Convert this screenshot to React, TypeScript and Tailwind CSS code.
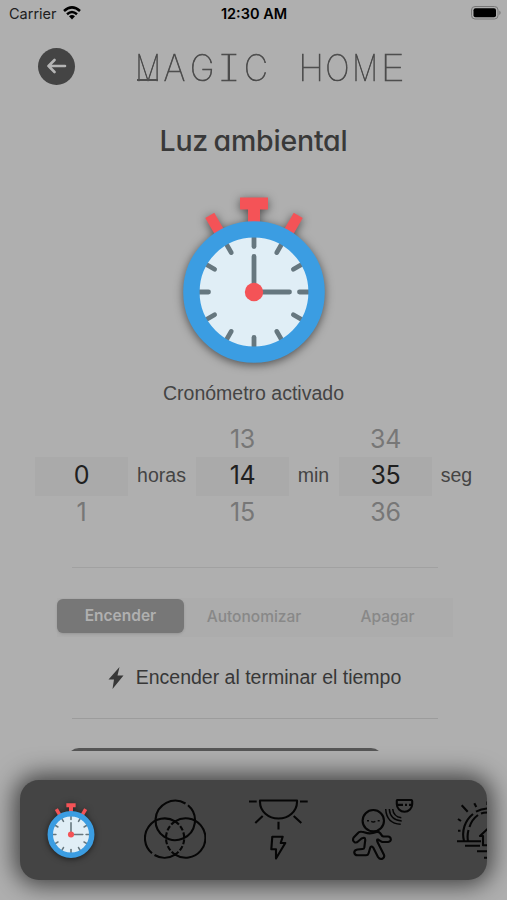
import type { ReactNode } from 'react';

type PickerColumn = {
  label: string;
  before: string;
  value: string;
  after: string;
  labelClass: string;
};

const columns: PickerColumn[] = [
  { label: 'horas', before: '', value: '0', after: '1', labelClass: 'w-[68px] pr-px' },
  { label: 'min', before: '13', value: '14', after: '15', labelClass: 'w-[50px] pr-px' },
  { label: 'seg', before: '34', value: '35', after: '36', labelClass: 'w-[49px]' },
];

const titleLetters = [
  { letter: 'M', className: 'scale-x-[0.78]' },
  { letter: 'A', className: 'scale-x-[0.95]' },
  { letter: 'G', className: 'scale-x-[0.92]' },
  { letter: 'I', className: 'scale-x-[1.5]' },
  { letter: 'C', className: 'scale-x-[0.92]' },
  { letter: ' ', className: '' },
  { letter: 'H', className: 'scale-x-[0.96]' },
  { letter: 'O', className: 'scale-x-[0.9]' },
  { letter: 'M', className: 'scale-x-[0.78]' },
  { letter: 'E', className: 'scale-x-[1.15]' },
];

const modes = [
  { label: 'Encender', className: 'mt-px h-[34px] w-[127px] rounded-md bg-[#777] pt-px font-semibold text-[#b0b0b0] shadow-sm' },
  { label: 'Autonomizar', className: 'h-[38px] w-[140px]' },
  { label: 'Apagar', className: 'h-[38px] w-[127px]' },
];

const tickAngles = [0, 30, 60, 90, 120, 150, 180, 210, 240, 270, 300, 330];

function Stopwatch({ className }: { className: string }) {
  return (
    <svg viewBox="-75 -98 150 172" className={className}>
      <g fill="#f45357">
        <path d="M-14-94.500H14V-82.500H6V-68H-6V-82.500H-14Z" />
        <rect x="-5.200" y="-88.500" width="10.400" height="22" transform="rotate(-30)" />
        <rect x="-5.200" y="-88.500" width="10.400" height="22" transform="rotate(30)" />
      </g>
      <circle r="60" fill="#e0eef6" />
      <g stroke="#66777f" strokeWidth="4.800" strokeLinecap="round">
        {tickAngles.map((angle) => (
          <path key={angle} d="M0-57V-45.500" transform={`rotate(${angle})`} />
        ))}
        <path d="M0-35.500V0H35.500" fill="none" />
      </g>
      <circle r="62.600" fill="none" stroke="#3b9de2" strokeWidth="16.400" />
      <circle r="9.200" fill="#f45357" />
    </svg>
  );
}

function NavIcon({ children }: { children: ReactNode }) {
  return (
    <svg
      viewBox="0 0 62 62"
      className="h-[62px] w-[62px] shrink-0"
      fill="none"
      stroke="#060606"
      strokeWidth="2.1"
      strokeLinejoin="round"
    >
      {children}
    </svg>
  );
}

function StatusBar() {
  return (
    <div className="grid h-7 grid-cols-3 items-center pl-[9px] pr-[6px] font-['Inter'] text-black">
      <div className="flex items-center gap-[6px] text-[14.5px] text-[#202020]">
        <span>Carrier</span>
        <svg viewBox="0 0 18 14" className="h-[14px] w-[18px] -translate-y-px" fill="none" stroke="#000" strokeWidth="2.500">
          <path d="M1 5Q9-2.200 17 5M4 8.200Q9 3.800 14 8.200" />
          <path d="M6 10.300Q9 7.700 12 10.300L9 13.500Z" fill="#000" stroke="none" />
        </svg>
      </div>
      <span className="pr-[2px] text-center text-[14.5px] font-semibold">12:30 AM</span>
      <svg viewBox="0 0 30 14" className="h-[14px] w-[30px] -translate-y-px justify-self-end">
        <rect x="0.500" y="0.500" width="26.500" height="12.500" rx="3.500" fill="none" stroke="#777" />
        <rect x="2.500" y="2.300" width="22.500" height="9" rx="2" />
        <path d="M28.300 4.500Q31 6.700 28.300 9Z" fill="#777" />
      </svg>
    </div>
  );
}

function Header() {
  return (
    <header className="flex h-[76px] shrink-0 items-center pl-[38px]">
      <button type="button" className="flex h-[37px] w-[37px] items-center justify-center rounded-full bg-[#444]">
        <svg viewBox="0 0 20 16" className="h-4 w-5" fill="none" stroke="#b5b5b5" strokeWidth="2.600" strokeLinecap="round" strokeLinejoin="round">
          <path d="M7.500 2L1.500 8L7.500 14M1.500 8H18" />
        </svg>
      </button>
      <h1 className="ml-[59px] flex pt-[3px] font-['Inter'] text-[36px] font-thin leading-none text-[#444] [-webkit-text-stroke:0.7px_#4a4a4a] [font-feature-settings:'cv08']">
        {titleLetters.map(({ letter, className }, index) => (
          <span key={index} className="relative flex w-[27.200px] justify-center">
            <span className={className}>{letter}</span>
            {index === 0 && <span className="absolute bottom-[5px] left-[3px] h-[1.500px] w-[21px] bg-[#505050]"></span>}
          </span>
        ))}
      </h1>
    </header>
  );
}

function TimePicker() {
  return (
    <div className="mt-[18px] flex shrink-0 pl-[35px]">
      {columns.map((column) => (
        <div key={column.label} className="flex items-center">
          <div className="w-[93px] text-center font-['Inter'] text-[25px] leading-[32px] tracking-[-0.3px] text-[#777]">
            <div className="h-[34px]">{column.before}</div>
            <div className="h-[39px] bg-[#aaa] leading-[37px] text-[#202020]">{column.value}</div>
            <div className="h-[34px]">{column.after}</div>
          </div>
          <span className={`${column.labelClass} text-center text-[19.500px] text-[#444]`}>{column.label}</span>
        </div>
      ))}
    </div>
  );
}

function ModeSwitch() {
  return (
    <div className="ml-[57px] mt-[30px] flex h-[39px] w-[396px] shrink-0 bg-[#acacac] font-['Inter'] text-[15.500px] font-medium text-[#888]">
      {modes.map((mode) => (
        <button key={mode.label} type="button" className={mode.className}>
          {mode.label}
        </button>
      ))}
    </div>
  );
}

function BottomNav() {
  return (
    <nav className="mx-5 mt-[29px] h-[100px] w-[467px] rounded-[19px] bg-[#444] shadow-[0_0_24px_5px_rgba(0,0,0,0.650)]">
      <div className="flex h-full items-center gap-[42px] overflow-hidden rounded-[19px] pl-[20px]">
        <div className="flex w-[62px] shrink-0 justify-center">
          <Stopwatch className="h-[57px] w-[50px] drop-shadow-[0_1px_3px_rgba(0,0,0,0.600)]" />
        </div>
        <NavIcon>
          <path d="M44 6.300A19.700 19.700 0 1 1 41.500 4.500" />
          <path d="M31.100 22.400A19.700 19.700 0 0 0 8 54.200M10.500 56A19.700 19.700 0 0 0 31.100 55.600" />
          <path d="M31.100 22.400A19.700 19.700 0 1 1 31.100 55.600" />
          <path d="M31.100 22.400A19.700 19.700 0 0 1 31.100 55.600M31.100 22.400A19.700 19.700 0 0 0 31.100 55.600" strokeDasharray="5 2" />
        </NavIcon>
        <NavIcon>
          <path d="M12 1.500H49V3A18.500 16.500 0 0 1 12 3ZM1 2.500H8.700M52 2.500H59.700M14.700 17L7.300 24M45.700 17L53.300 24M30.500 22.700V30.500" />
          <path d="M24.300 37.700H34.700L32.700 44H37.300L28 59.500V50.300H23.300Z" />
        </NavIcon>
        <NavIcon>
          <circle cx="21.300" cy="21.700" r="10.700" />
          <path d="M15 21.700H17M19.300 22.300Q21.300 23.600 23.300 22.300M25.700 21.700H27.700" strokeWidth="1.500" />
          <path d="M44.800 1.800Q44.800 1 46 1H59Q60.200 1 60.200 2.200V5A7.700 7.700 0 0 1 44.800 5ZM45 5.900H51M53 5.900H55M57 5.900H60" />
          <path d="M33.700 10Q34.500 24.500 48.700 25.300M37.300 10Q38 21 49.700 22M40.700 10Q41.500 17.700 49.300 18.700" strokeWidth="1.500" />
          <path d="M9.500 32.800Q7 32.500 5.500 34.500L1.700 38.500Q0 41.500 2.500 43.200Q4.500 44 6 42.500L9.500 39.500L12 38.800Q13.500 39 13.200 41.500L12.300 48.500Q12 50 10.500 50L5.500 50.500Q2 51 2.300 53.800Q2.800 56.300 5.500 56.300H14Q16 56.300 16.500 54.500L18.300 48.500Q19.800 46.500 21.300 48.800L26 58Q28 61 30.800 59.500Q33 58 31.800 55.500L25.500 43Q24.500 40 26 40.500L29 42.300Q30 43 32 43H36Q39 42.500 38.800 40.200Q38.500 37.500 36 37.500H31.500Q30 37.300 29.500 36L28 34Q26.500 32.500 24.500 33Q18 35.500 13 33.500Q11 32.800 9.500 32.800Z" />
        </NavIcon>
        <NavIcon>
          <path d="M8 42A26 26 0 0 1 17 15M20 12.700A26 26 0 0 1 31 9.500H36M12 42A24 24 0 0 1 12.500 31M13.500 28A23 23 0 0 1 22 16M25 14.500Q29 13.200 36 13.500" />
          <path d="M5.700 6.300L11.700 12.700M18.300 4.300L20.300 8M31.500 2.500V6M2 20L5 22M2 31.700H4.500M1 42.300H25M9 46.700H24M21 52.300H40M28 58.700H38" />
          <path d="M34 27.500L24 37H27V46.300H36" />
        </NavIcon>
      </div>
    </nav>
  );
}

export default function App() {
  return (
    <div className="h-[900px] w-[507px] overflow-hidden bg-[#afafaf] font-['Liberation_Sans',sans-serif]">
      <StatusBar />
      <main className="flex h-[723px] flex-col overflow-hidden">
        <Header />
        <h2 className="mt-[17px] shrink-0 text-center font-['Inter'] text-[28.500px] font-medium leading-[40px] tracking-[-0.2px] text-[#393939] [font-feature-settings:'cv11'] [word-spacing:-2px]">
          Luz ambiental
        </h2>
        <Stopwatch className="mx-auto mt-[33px] h-[172px] w-[150px] shrink-0 drop-shadow-[0_2px_5px_rgba(0,0,0,0.550)]" />
        <p className="mt-[14.500px] shrink-0 text-center text-[19.500px] leading-[24px] text-[#444]">Cronómetro activado</p>
        <TimePicker />
        <div className="ml-[72px] mt-[37px] h-px w-[366px] shrink-0 bg-[#a1a1a1]"></div>
        <ModeSwitch />
        <div className="mt-[29px] flex h-[24px] shrink-0 items-center justify-center gap-[12px] pl-[2px] text-[19.500px] text-[#373737]">
          <svg viewBox="0 0 16 22" className="h-[22px] w-4" fill="#373737">
            <path d="M11.500 0L0.500 12.500H6L4.500 22L15.500 8.500H9.500Z" />
          </svg>
          <span>Encender al terminar el tiempo</span>
        </div>
        <div className="ml-[72px] mt-[28px] h-px w-[366px] shrink-0 bg-[#9c9c9c]"></div>
        <div className="ml-[67px] mt-[29px] h-[50px] w-[316px] shrink-0 rounded-[12px] bg-[#555]"></div>
      </main>
      <BottomNav />
    </div>
  );
}
